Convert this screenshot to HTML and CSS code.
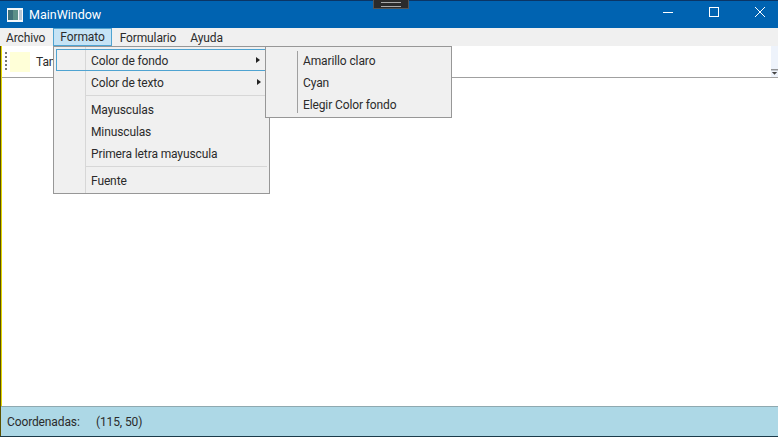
FILE: index.html
```html
<!DOCTYPE html>
<html lang="es">
<head>
<meta charset="utf-8">
<title>MainWindow</title>
<link rel="stylesheet" href="styles.css">
</head>
<body>
<div class="window">
  <header class="titlebar">
    <svg class="app-icon" width="16" height="14" viewBox="0 0 16 14"><rect width="16" height="14" fill="#f4f7fa"/><rect x="1" y="2" width="10" height="10" fill="#5c9088"/><rect x="1" y="2" width="5" height="10" fill="#3f7078"/><rect x="12" y="2" width="3" height="10" fill="#b8c6d4"/></svg>
    <span class="title">MainWindow</span>
    <div class="caption">
      <svg class="cap" width="46" height="28" viewBox="0 0 46 28"><path d="M18 12.5h10" stroke="#fff" fill="none"/></svg>
      <svg class="cap" width="46" height="28" viewBox="0 0 46 28"><rect x="18.5" y="7.5" width="9" height="9" stroke="#fff" fill="none"/></svg>
      <svg class="cap" width="46" height="28" viewBox="0 0 46 28"><path d="M18 7l10 10M28 7l-10 10" stroke="#fff" fill="none"/></svg>
    </div>
  </header>
  <nav class="menubar">
    <span class="menu-item">Archivo</span>
    <span class="menu-item active">Formato</span>
    <span class="menu-item after-active">Formulario</span>
    <span class="menu-item">Ayuda</span>
  </nav>
  <div class="toolbar">
    <div class="grip"></div>
    <div class="swatch"></div>
    <span class="tool-label">Tamaño</span>
    <div class="overflow"><svg width="8" height="8" viewBox="0 0 8 8"><path d="M0 1.5h8" stroke="#555"/><path d="M1 4h6L4 7z" fill="#444"/></svg></div>
  </div>
  <main class="content"></main>
  <footer class="statusbar">
    <span class="coord-label">Coordenadas:</span>
    <span>(115, 50)</span>
  </footer>
  <div class="dropdown">
    <div class="row hot"><span>Color de fondo</span><i class="arrow"></i></div>
    <div class="row"><span>Color de texto</span><i class="arrow"></i></div>
    <div class="sep"></div>
    <div class="row"><span>Mayusculas</span></div>
    <div class="row"><span>Minusculas</span></div>
    <div class="row"><span>Primera letra mayuscula</span></div>
    <div class="sep"></div>
    <div class="row"><span>Fuente</span></div>
  </div>
  <div class="submenu">
    <div class="row"><span>Amarillo claro</span></div>
    <div class="row"><span>Cyan</span></div>
    <div class="row"><span>Elegir Color fondo</span></div>
  </div>
  <div class="monitor-tab"></div>
</div>
</body>
</html>
```
FILE: styles.css
```css
* { box-sizing: border-box; }
html, body { margin: 0; height: 100%; }
body { font-family: Roboto, "Liberation Sans", sans-serif; font-size: 12px; letter-spacing: -0.12px; color: #2b2b2b; overflow: hidden; }
.window { position: relative; width: 778px; height: 437px; display: flex; flex-direction: column; padding-left: 2px; background: linear-gradient(90deg, #5a5200 1px, #e4d600 1px, #e4d600 2px, #fff 2px); border-bottom: 1px solid #1b3a4a; }
.titlebar { height: 28px; margin-left: -2px; flex: none; background: #0063b1; border-top: 1px solid #0a3566; color: #fff; display: flex; align-items: center; padding-left: 7px; font-size: 12.5px; letter-spacing: 0; }
.app-icon { margin-right: 6px; }
.title { flex: 1; }
.caption { display: flex; margin-top: -1px; margin-right: -5px; }
.cap { display: block; }
.menubar { height: 18px; flex: none; margin-left: -2px; background: #f0f0f0; display: flex; align-items: stretch; }
.menu-item { padding: 0 6px; line-height: 18px; border: 1px solid transparent; }
.menu-item:first-child { padding: 0 7px 0 5px; }
.menu-item.active { background: #c5e3f5; border-color: #4fa3d1; line-height: 16px; }
.menu-item.after-active { margin-left: 1px; }
.toolbar { height: 32px; flex: none; border-bottom: 1px solid #a0a0a0; background: #fff; display: flex; align-items: center; padding-left: 3px; position: relative; }
.grip { width: 2px; height: 20px; background: repeating-linear-gradient(#777 0 2px, transparent 2px 4px); margin-right: 3px; }
.swatch { width: 20px; height: 20px; background: #ffffd8; margin-right: 6px; }
.tool-label { white-space: nowrap; }
.overflow { margin-left: auto; width: 7px; height: 31px; background: #eef3fb; display: flex; align-items: flex-end; padding-bottom: 1px; }
.content { flex: 1; background: #fff; }
.statusbar { height: 30px; flex: none; margin-left: -1px; background: #add8e6; border-top: 1px solid #8fa9b0; display: flex; align-items: center; padding-left: 6px; }
.coord-label { width: 89px; }
.dropdown, .submenu { position: absolute; background: #f0f0f0; border: 1px solid #979797; }
.dropdown { left: 53px; top: 46px; width: 217px; height: 148px; padding: 2px; background-image: linear-gradient(#d7d7d7, #d7d7d7); background-size: 1px 100%; background-position: 31px 0; background-repeat: no-repeat; }
.submenu { left: 265px; top: 46px; width: 187px; height: 72px; padding: 2px; }
.submenu::before { content: ""; position: absolute; left: 31px; top: 4px; bottom: 4px; width: 1px; background: #a0a0a0; }
.row { height: 22px; display: flex; align-items: center; padding: 1px 0 0 34px; border: 1px solid transparent; position: relative; }
.row.hot { border-color: #4fa3d1; width: 210px; }
.arrow { position: absolute; right: 5px; top: 7px; border-left: 4px solid #222; border-top: 3.5px solid transparent; border-bottom: 3.5px solid transparent; }
.sep { height: 1px; background: #d7d7d7; margin: 2px 0 2px 29px; }
.monitor-tab { position: absolute; left: 373px; top: 0; width: 36px; height: 9px; background: #2b2b2b; border: 1px solid #555; border-top: 0; }
.monitor-tab::before { content: ""; position: absolute; left: 7px; top: 2px; right: 7px; height: 3px; border-top: 1px solid #aaa; border-bottom: 1px solid #aaa; }
```
